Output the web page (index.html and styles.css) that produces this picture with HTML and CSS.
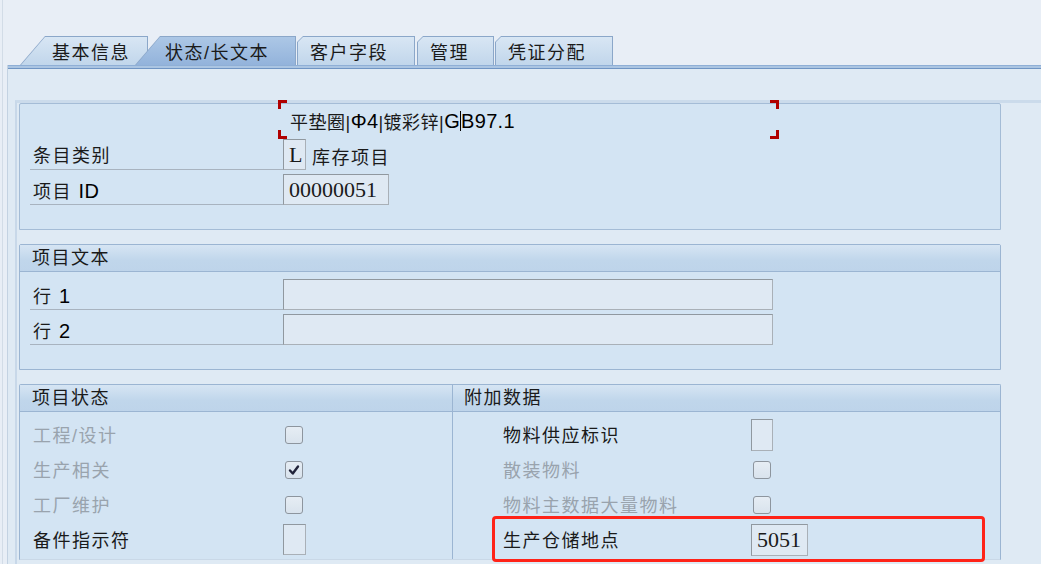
FILE: index.html
```html
<!DOCTYPE html>
<html lang="zh-CN">
<head>
    <meta charset="UTF-8">
    <title>状态/长文本</title>
    <link rel="stylesheet" href="styles.css">
</head>
<body>
<div class="screen">
    <div class="tabs">
        <div class="tab slant first"><span>基本信息</span></div>
        <div class="tab slant active"><span>状态/长文本</span></div>
        <div class="tab t3"><span>客户字段</span></div>
        <div class="tab t4"><span>管理</span></div>
        <div class="tab t5"><span>凭证分配</span></div>
    </div>
    <div class="page">
        <div class="page-line"></div>
        <div class="page-body">
            <div class="scroll">
                <!-- 抬头 -->
                <div class="panel plain">
                    <div class="title-row">
                        <div class="title-field">平垫圈|<b>Φ4</b>|镀彩锌|<b>G<i class="caret"></i>B97.1</b></div>
                    </div>
                    <div class="row">
                        <div class="label line">条目类别</div>
                        <div class="box box-l">L</div>
                        <div class="desc">库存项目</div>
                    </div>
                    <div class="row">
                        <div class="label line">项目 <b class="lat">ID</b></div>
                        <div class="box box-id">00000051</div>
                    </div>
                </div>

                <!-- 项目文本 -->
                <div class="panel">
                    <div class="panel-head">项目文本</div>
                    <div class="panel-body">
                        <div class="row">
                            <div class="label line">行 <b class="lat">1</b></div>
                            <div class="box box-long"></div>
                        </div>
                        <div class="row">
                            <div class="label line">行 <b class="lat">2</b></div>
                            <div class="box box-long"></div>
                        </div>
                    </div>
                </div>

                <!-- 状态 / 附加数据 -->
                <div class="panel split">
                    <div class="col col-left">
                        <div class="panel-head">项目状态</div>
                        <div class="panel-body last">
                            <div class="row">
                                <div class="label off">工程/设计</div>
                                <div class="slot"><div class="check"></div></div>
                            </div>
                            <div class="row">
                                <div class="label off">生产相关</div>
                                <div class="slot">
                                    <div class="check">
                                        <svg width="16" height="16" viewBox="0 0 16 16"><path d="M4 8.5 L6.8 11.5 L12 4.5" fill="none" stroke="#22243a" stroke-width="2.4" stroke-linecap="round" stroke-linejoin="round"/></svg>
                                    </div>
                                </div>
                            </div>
                            <div class="row">
                                <div class="label off">工厂维护</div>
                                <div class="slot"><div class="check"></div></div>
                            </div>
                            <div class="row">
                                <div class="label">备件指示符</div>
                                <div class="box box-l"></div>
                            </div>
                        </div>
                    </div>
                    <div class="col col-right">
                        <div class="panel-head">附加数据</div>
                        <div class="panel-body last">
                            <div class="row">
                                <div class="label">物料供应标识</div>
                                <div class="box box-s"></div>
                            </div>
                            <div class="row">
                                <div class="label off">散装物料</div>
                                <div class="slot"><div class="check"></div></div>
                            </div>
                            <div class="row">
                                <div class="label off">物料主数据大量物料</div>
                                <div class="slot"><div class="check"></div></div>
                            </div>
                            <div class="row marked">
                                <div class="label">生产仓储地点</div>
                                <div class="box box-plant">5051</div>
                                <div class="mark"></div>
                            </div>
                        </div>
                    </div>
                </div>
            </div>
        </div>
    </div>
</div>
</body>
</html>
```

FILE: styles.css
```css
*{
    padding: 0;
    margin: 0;
    box-sizing: border-box;
}
html,body{
    width: 1041px;
    height: 564px;
    overflow: hidden;
}
body{
    background: #e8eef6;
    font-family: "Liberation Sans", "Noto Sans CJK SC", sans-serif;
    font-size: 18px;
    color: #1a1a1a;
    letter-spacing: 1.5px;
}
.screen{
    margin-left: 2px;
    border-left: 1px solid #d2dce7;
    height: 564px;
}

/* tabs */
.tabs{
    display: flex;
    padding: 36px 0 0 17px;
    height: 65px;
}
.tab{
    height: 29px;
    padding: 1px 1px 0 1px;
    background: #8ba7c9;
    clip-path: polygon(6px 0, 100% 0, 100% 100%, 0 100%, 0 6px);
}
.tab span{
    display: flex;
    align-items: center;
    height: 100%;
    padding-left: 12px;
    background: linear-gradient(#d8e6f4, #c1d6eb);
    clip-path: polygon(5px 0, 100% 0, 100% 100%, 0 100%, 0 5px);
}
.tab.slant{
    clip-path: polygon(25px 0, 100% 0, 100% 100%, 0 100%);
}
.tab.slant span{
    clip-path: polygon(24px 0, 100% 0, 100% 100%, 0 100%);
}
.tab.first{
    width: 128px;
}
.tab.first span{
    padding-left: 31px;
}
.tab.active{
    width: 161px;
    margin-left: -13px;
    z-index: 2;
}
.tab.active span{
    padding-left: 29px;
    background: linear-gradient(#acc7e6, #93b3db);
}
.tab.t3{
    width: 118px;
    margin-left: 1px;
}
.tab.t4{
    width: 77px;
    margin-left: 2px;
}
.tab.t5{
    width: 118px;
    margin-left: 1px;
}

/* page */
.page{
    margin-left: 4px;
    border-left: 1px solid #c3d2e2;
    height: 499px;
}
.page-line{
    height: 4px;
    background: linear-gradient(#8fafd6 0, #8fafd6 25%, #abc5e2 25%, #abc5e2 75%, #7095c4 75%);
}
.page-body{
    background: #dfeaf4;
    height: 495px;
    padding: 31px 0 0 7px;
}
.scroll{
    border-top: 3px solid #cbdbeb;
    border-left: 2px solid #c8d8e9;
    padding-left: 2px;
    height: 464px;
}

/* panels */
.panel{
    width: 982px;
    border: 1px solid #9bb5d2;
    border-radius: 2px 2px 0 0;
    background: #d3e4f3;
    margin-bottom: 14px;
}
.panel.plain{
    padding-bottom: 20px;
    border-color: #a4bcd6;
}
.panel-head{
    height: 27px;
    line-height: 27px;
    padding-left: 12px;
    border-bottom: 1px solid #9bb5d2;
    background: linear-gradient(#d6e5f3, #c0d6eb 60%, #bed4ea);
}
.panel-body{
    padding: 7px 0 20px;
}
.panel-body.last{
    padding-bottom: 0;
}
.panel.split{
    display: flex;
    border-bottom-color: #c9d8e7;
}
.col-left{
    width: 432px;
}
.col-right{
    flex: 1;
    border-left: 1px solid #9bb5d2;
}
.col-right .panel-head{
    padding-left: 11px;
}
.col-right .label{
    margin-left: 47px;
    width: 251px;
}

/* title field */
.title-row{
    display: flow-root;
    height: 35px;
}
.title-field{
    display: flex;
    align-items: center;
    width: 501px;
    height: 39px;
    margin: -4px 0 0 258px;
    padding: 3px 0 0 12px;
    letter-spacing: 0.5px;
    background:
        linear-gradient(#b00000, #b00000) left top / 9px 3px no-repeat,
        linear-gradient(#b00000, #b00000) left top / 3px 9px no-repeat,
        linear-gradient(#b00000, #b00000) right top / 9px 3px no-repeat,
        linear-gradient(#b00000, #b00000) right top / 3px 9px no-repeat,
        linear-gradient(#b00000, #b00000) left bottom / 9px 3px no-repeat,
        linear-gradient(#b00000, #b00000) left bottom / 3px 9px no-repeat,
        linear-gradient(#b00000, #b00000) right bottom / 9px 3px no-repeat,
        linear-gradient(#b00000, #b00000) right bottom / 3px 9px no-repeat;
}
.title-field b{
    font-weight: normal;
    font-size: 20px;
    color: #000;
    letter-spacing: 0.3px;
}
.caret{
    display: inline-block;
    width: 1px;
    height: 20px;
    background: #000;
    vertical-align: -3px;
}
.lat{
    font-weight: normal;
    font-size: 20px;
    color: #000;
    letter-spacing: 0.5px;
}

/* rows */
.row{
    display: flex;
    align-items: center;
    height: 31px;
    margin-bottom: 4px;
}
.label{
    width: 253px;
    height: 31px;
    line-height: 28px;
    margin-left: 10px;
    padding-top: 3px;
    padding-left: 3px;
    white-space: nowrap;
}
.label.line{
    border-bottom: 1px solid #a8b3bf;
}
.label.off{
    color: #99a3ad;
}
.desc{
    margin-left: 6px;
    padding-top: 2px;
}
.box{
    height: 31px;
    border: 1px solid #a9b0b7;
    border-top-color: #90989f;
    border-left-color: #90989f;
    background: #dfe9f3;
    font-family: "Liberation Serif", serif;
    font-size: 22px;
    letter-spacing: 0;
    line-height: 30px;
    padding-left: 5px;
}
.box-l{
    width: 23px;
}
.box-id{
    width: 106px;
}
.box-long{
    width: 490px;
}
.box-s{
    width: 22px;
    height: 32px;
}
.box-plant{
    width: 57px;
    height: 32px;
}
.slot{
    width: 22px;
    display: flex;
    justify-content: center;
}
.check{
    width: 18px;
    height: 18px;
    border: 1px solid #8d959e;
    border-radius: 3px;
    background: linear-gradient(#e6edf4, #d9e3ed);
    display: flex;
    align-items: center;
    justify-content: center;
}
.check svg{
    display: block;
}

/* highlight */
.marked{
    position: relative;
}
.mark{
    position: absolute;
    left: 39px;
    top: -8px;
    width: 493px;
    height: 46px;
    border: 3px solid #ff2318;
    border-radius: 4px;
}
```
